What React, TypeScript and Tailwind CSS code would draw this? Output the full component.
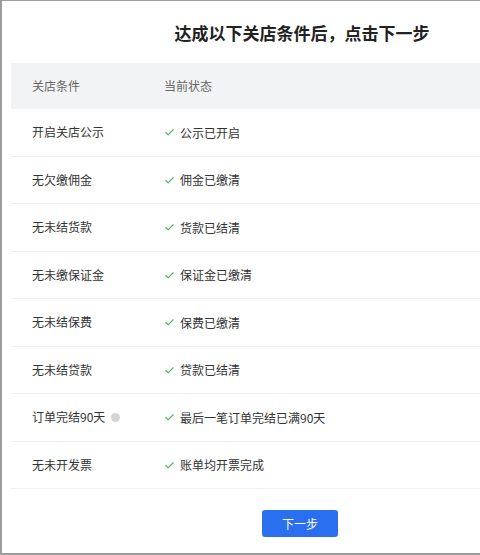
import { Check } from 'lucide-react';

// 关店前置条件检查
const conditions = [
  { name: '开启关店公示', status: '公示已开启' },
  { name: '无欠缴佣金', status: '佣金已缴清' },
  { name: '无未结货款', status: '货款已结清' },
  { name: '无未缴保证金', status: '保证金已缴清' },
  { name: '无未结保费', status: '保费已缴清' },
  { name: '无未结贷款', status: '贷款已结清' },
  { name: '订单完结90天', status: '最后一笔订单完结已满90天', tip: true },
  { name: '无未开发票', status: '账单均开票完成' },
];

export default function App() {
  return (
    <div
      className="w-[480px] h-[555px] overflow-hidden bg-white"
      style={{ fontFamily: '"Noto Sans CJK SC", "Liberation Sans", sans-serif' }}
    >
      <div className="w-[600px] h-[555px] border-l-2 border-t border-b-2 border-[#9c9c9c] pl-[9px] pr-[9px] flex flex-col">
        <h2 className="h-[62px] shrink-0 flex items-center justify-center text-[17px] font-bold text-[#222] pt-[2px] pl-[2px]">
          达成以下关店条件后，点击下一步
        </h2>

        <div className="flex h-[46px] shrink-0 items-center bg-[#f2f3f5] text-[12px] text-[#666]">
          <div className="w-[153px] pl-[21px]">关店条件</div>
          <div>当前状态</div>
        </div>

        {conditions.map(c => (
          <div
            key={c.name}
            className="flex h-[47.5px] shrink-0 items-center border-b border-[#efefef] text-[12px] text-[#333]"
          >
            <div className="w-[153px] pl-[21px] flex items-center gap-[6px]">
              {c.name}
              {c.tip && (
                <span className="inline-block w-[9px] h-[9px] rounded-full bg-[#d4d4d4]" />
              )}
            </div>
            <div className="flex items-center gap-[5px] pt-[1px]">
              <Check size={11} strokeWidth={2.5} className="text-[#52b45a]" />
              {c.status}
            </div>
          </div>
        ))}

        <div className="flex justify-center pt-[21px] pr-[2px]">
          <button className="w-[76px] h-[27px] rounded-[3px] bg-[#2a6ff0] text-white text-[12px]">
            下一步
          </button>
        </div>
      </div>
    </div>
  );
}
